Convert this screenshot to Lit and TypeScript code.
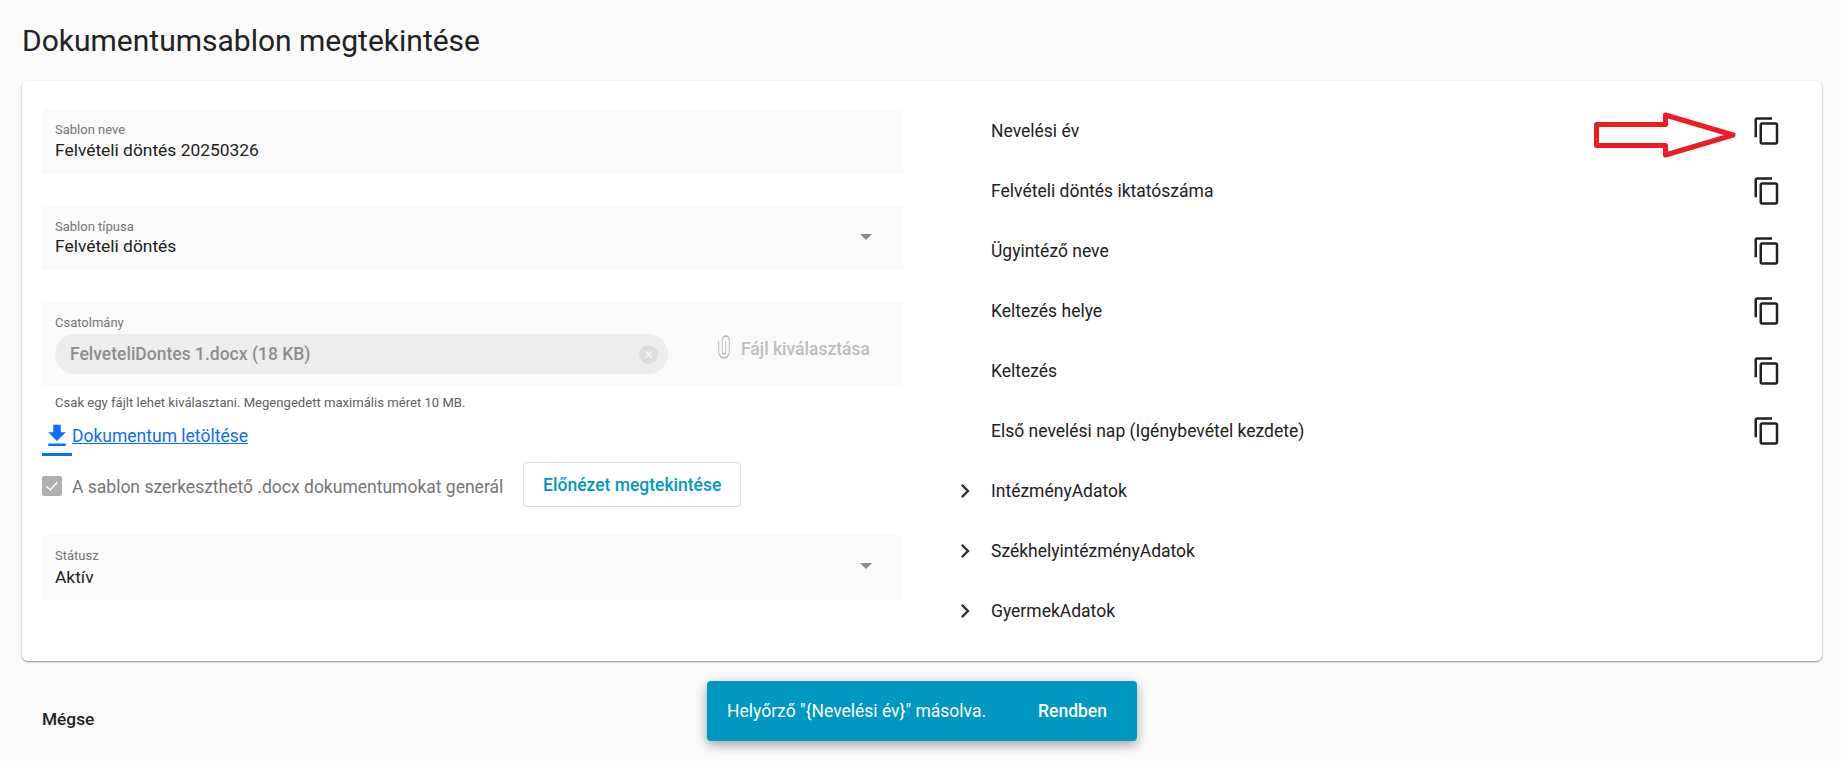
import { LitElement, html, css, svg } from "lit";
import { customElement } from "lit/decorators.js";

const copyIcon = svg`<svg class="copy" viewBox="0 0 24 24" width="30" height="30" fill="#212121"><path d="M16 1H4c-1.1 0-2 .9-2 2v14h2V3h12V1zm3 4H8c-1.1 0-2 .9-2 2v14c0 1.1.9 2 2 2h11c1.1 0 2-.9 2-2V7c0-1.100-.9-2-2-2zm0 16H8V7h11v14z"/></svg>`;
const chevron = svg`<svg viewBox="0 0 24 24" width="28" height="28" fill="#333"><path d="M8.590 16.590 13.170 12 8.590 7.410 10 6l6 6-6 6z"/></svg>`;

const leaves = ["Nevelési év", "Felvételi döntés iktatószáma", "Ügyintéző neve", "Keltezés helye", "Keltezés", "Első nevelési nap (Igénybevétel kezdete)"];
const groups = ["IntézményAdatok", "SzékhelyintézményAdatok", "GyermekAdatok"];

@customElement("app-root")
export class AppRoot extends LitElement {
  static styles = css`
    :host { display: block; position: relative; height: 761px; overflow: hidden; background: #fafafa; font-family: Roboto, sans-serif; color: #212121; box-sizing: border-box; padding: 0 19px 0 22px; }
    * { box-sizing: border-box; }
    h1 { margin: 0; height: 81px; padding-top: 23px; font-size: 30px; line-height: 36px; font-weight: 400; }
    .card { height: 580px; background: #fff; border-radius: 6px; box-shadow: 0 1px 2px rgba(0,0,0,.45); padding: 20px 20px 0; display: grid; grid-template-columns: 861px 1fr; }
    .left { display: flex; flex-direction: column; padding-top: 8px; }
    .field { background: #fafafa; border-radius: 4px 4px 0 0; padding: 13px 13px 0; position: relative; height: 65px; }
    .mt { margin-top: 32px; }
    .short { height: 64px; }
    .label { font-size: 13px; line-height: 16px; color: #757575; height: 16px; }
    .value { font-size: 17.400px; line-height: 22px; margin-top: 1px; }
    .mt .value { margin-top: 0; }
    .status .value { margin-top: 2px; }
    .caret { position: absolute; right: 31px; top: 28px; width: 0; height: 0; border-left: 6px solid transparent; border-right: 6px solid transparent; border-top: 6px solid #8a8a8a; }
    .attach { height: 85px; }
    .attach-row { display: flex; align-items: center; margin-top: 3px; }
    .chip { width: 613px; height: 40px; border-radius: 20px; background: #ededed; display: flex; align-items: center; justify-content: space-between; padding: 0 10px 0 15px; color: #8e8e8e; font-size: 17.500px; font-weight: 500; }
    .chip-x { width: 19px; height: 19px; display: block; }
    .pick { display: flex; align-items: center; margin-left: 49px; margin-top: -10px; color: #bdbdbd; font-size: 17.500px; font-weight: 500; }
    .pick svg { margin: -5px 10px 0 0; }
    .hint { font-size: 13.100px; line-height: 16px; color: #616161; padding: 8px 13px 0; height: 34px; }
    .dl { display: flex; align-items: flex-start; height: 35px; }
    .dl-icon { width: 30px; height: 35px; border-bottom: 3px solid #0d6efd; display: block; }
    .dl-icon svg { display: block; }
    .dl a { color: #0d6efd; font-size: 17.500px; line-height: 24px; margin-top: 3px; text-decoration: underline; }
    .check { display: flex; align-items: center; height: 45px; margin-top: 6px; }
    .box { width: 20px; height: 20px; border-radius: 2px; background: #b0b0b0; display: flex; align-items: center; justify-content: center; margin: 3px 10px 0 0; }
    .check-label { font-size: 17.500px; color: #757575; margin-top: 4px; }
    .btn { margin-left: 20px; width: 218px; height: 45px; border: 1px solid #ddd; border-radius: 4px; background: #fff; display: flex; align-items: center; justify-content: center; color: #0097c1; font-size: 17.500px; font-weight: 500; }
    .status { margin-top: 28px; }
    .right { padding-left: 46px; }
    .row { height: 60px; display: flex; align-items: center; font-size: 17.500px; }
    .row .copy { margin-left: auto; margin-right: 20px; }
    .row.group svg { margin-left: 2px; margin-right: 12px; }
    .leaf { padding-left: 42px; }
    .cancel { position: absolute; left: 42px; top: 709px; font-size: 17.300px; line-height: 20px; font-weight: 500; color: #212121; }
    .toast { position: absolute; left: 707px; top: 681px; width: 430px; height: 60px; border-radius: 4px; background: #0097c1; color: #fff; font-size: 17.500px; display: flex; align-items: center; justify-content: space-between; padding: 0 30px 0 20px; box-shadow: 0 4px 12px rgba(0,0,0,.35); }
    .toast b { font-weight: 500; }
    .arrow { position: absolute; left: 1592px; top: 110px; }
  `;

  render() {
    return html`
      <h1>Dokumentumsablon megtekintése</h1>
      <div class="card">
        <div class="left">
          <div class="field"><div class="label">Sablon neve</div><div class="value">Felvételi döntés 20250326</div></div>
          <div class="field mt short"><div class="label">Sablon típusa</div><div class="value">Felvételi döntés</div><span class="caret"></span></div>
          <div class="field mt attach">
            <div class="label">Csatolmány</div>
            <div class="attach-row">
              <div class="chip"><span>FelveteliDontes 1.docx (18 KB)</span>
                <svg class="chip-x" viewBox="0 0 18 18"><circle cx="9" cy="9" r="9" fill="#dcdcdc"/><path d="M6 6l6 6M12 6l-6 6" stroke="#f2f2f2" stroke-width="1.500"/></svg>
              </div>
              <div class="pick">
                <svg viewBox="0 0 24 24" width="14" height="24" fill="none" stroke="#b5b5b5" stroke-width="1.500" preserveAspectRatio="none"><path d="M3 6v11a9 6 0 0 0 18 0V5a6 4 0 0 0-12 0v12a3 2 0 0 0 6 0V6"/></svg>
                Fájl kiválasztása
              </div>
            </div>
          </div>
          <div class="hint">Csak egy fájlt lehet kiválasztani. Megengedett maximális méret 10 MB.</div>
          <div class="dl">
            <span class="dl-icon"><svg viewBox="0 0 24 24" width="30" height="30" fill="#0d6efd"><path d="M19 9h-4V3H9v6H5l7 7 7-7zM5 18v2h14v-2H5z"/></svg></span>
            <a href="#">Dokumentum letöltése</a>
          </div>
          <div class="check">
            <span class="box"><svg viewBox="0 0 20 20" width="18" height="18" fill="none" stroke="#fff" stroke-width="1.500"><path d="M4 10.500l4 4 8-9"/></svg></span>
            <span class="check-label">A sablon szerkeszthető .docx dokumentumokat generál</span>
            <span class="btn">Előnézet megtekintése</span>
          </div>
          <div class="field status"><div class="label">Státusz</div><div class="value">Aktív</div><span class="caret"></span></div>
        </div>
        <div class="right">
          ${leaves.map((t) => html`<div class="row leaf"><span class="txt">${t}</span>${copyIcon}</div>`)}
          ${groups.map((t) => html`<div class="row group">${chevron}<span class="txt">${t}</span></div>`)}
        </div>
      </div>
      <div class="cancel">Mégse</div>
      <div class="toast"><span>Helyőrző "{Nevelési év}" másolva.</span><b>Rendben</b></div>
      <svg class="arrow" width="148" height="50" viewBox="0 0 148 50" fill="#fff" stroke="#ed1c24" stroke-width="5" stroke-linejoin="round"><path d="M4.500 14.500H73.500V5L141 25 73.500 45V35.500H4.500z"/></svg>
    `;
  }
}
